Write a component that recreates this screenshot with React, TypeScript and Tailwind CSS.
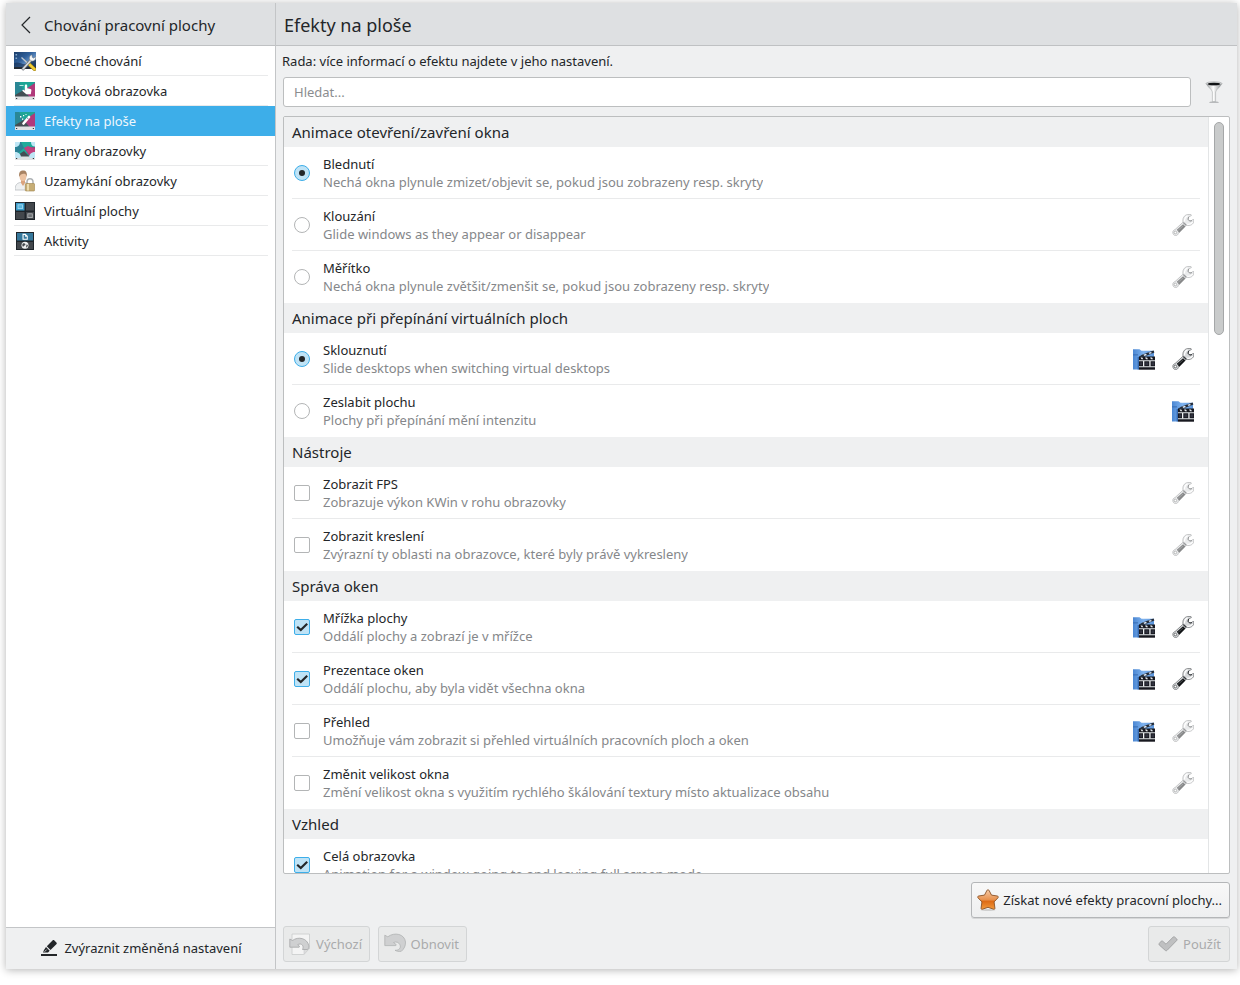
import { useState, type FC, type ReactNode } from "react";

interface Effect {
  name: string;
  description: string;
  checked?: boolean;
  video?: boolean;
  config?: "enabled" | "disabled";
}

interface EffectGroup {
  title: string;
  type: "radio" | "checkbox";
  effects: Effect[];
}

const groups: EffectGroup[] = [
  {
    title: "Animace otevření/zavření okna",
    type: "radio",
    effects: [
      {
        name: "Blednutí",
        description: "Nechá okna plynule zmizet/objevit se, pokud jsou zobrazeny resp. skryty",
        checked: true,
      },
      {
        name: "Klouzání",
        description: "Glide windows as they appear or disappear",
        config: "disabled",
      },
      {
        name: "Měřítko",
        description: "Nechá okna plynule zvětšit/zmenšit se, pokud jsou zobrazeny resp. skryty",
        config: "disabled",
      },
    ],
  },
  {
    title: "Animace při přepínání virtuálních ploch",
    type: "radio",
    effects: [
      {
        name: "Sklouznutí",
        description: "Slide desktops when switching virtual desktops",
        checked: true,
        video: true,
        config: "enabled",
      },
      {
        name: "Zeslabit plochu",
        description: "Plochy při přepínání mění intenzitu",
        video: true,
      },
    ],
  },
  {
    title: "Nástroje",
    type: "checkbox",
    effects: [
      {
        name: "Zobrazit FPS",
        description: "Zobrazuje výkon KWin v rohu obrazovky",
        config: "disabled",
      },
      {
        name: "Zobrazit kreslení",
        description: "Zvýrazní ty oblasti na obrazovce, které byly právě vykresleny",
        config: "disabled",
      },
    ],
  },
  {
    title: "Správa oken",
    type: "checkbox",
    effects: [
      {
        name: "Mřížka plochy",
        description: "Oddálí plochy a zobrazí je v mřížce",
        checked: true,
        video: true,
        config: "enabled",
      },
      {
        name: "Prezentace oken",
        description: "Oddálí plochu, aby byla vidět všechna okna",
        checked: true,
        video: true,
        config: "enabled",
      },
      {
        name: "Přehled",
        description: "Umožňuje vám zobrazit si přehled virtuálních pracovních ploch a oken",
        video: true,
        config: "disabled",
      },
      {
        name: "Změnit velikost okna",
        description: "Změní velikost okna s využitím rychlého škálování textury místo aktualizace obsahu",
        config: "disabled",
      },
    ],
  },
  {
    title: "Vzhled",
    type: "checkbox",
    effects: [
      {
        name: "Celá obrazovka",
        description: "Animation for a window going to and leaving full screen mode",
        checked: true,
      },
    ],
  },
];

const WorkspaceIcon: FC = () => (
  <svg viewBox="0 0 22 20" className="h-5 w-[22px]" aria-hidden="true">
    <defs>
      <linearGradient id="workspace-bg" x1="0" y1="0" x2="1" y2="1">
        <stop offset="0" stopColor="#1b3d69" />
        <stop offset="0.4" stopColor="#2f5f9a" />
        <stop offset="0.6" stopColor="#5f8cc0" />
        <stop offset="1" stopColor="#1a3358" />
      </linearGradient>
    </defs>
    <rect x="0" y="1" width="22" height="17" fill="url(#workspace-bg)" />
    <path d="M0 12c5-2 8 2 12 1s6-4 10-4v7H0z" fill="#17335a" opacity=".7" />
    <rect x="0" y="16" width="22" height="2" fill="#242c36" />
    <path d="M1.500 3h1.600v1.600H1.500zM1.500 6.500h1.600v1.600H1.500z" fill="#86a9cb" />
    <path d="M7.500 6.500l7 6.500" stroke="#c3c9ce" strokeWidth="1.300" />
    <path d="M14.500 12.500l6 5.700" stroke="#a98712" strokeWidth="3.600" strokeLinecap="round" />
    <path d="M14.500 12.500l6 5.700" stroke="#f3cf35" strokeWidth="2.400" strokeLinecap="round" />
    <path d="M9 18L17.500 8.500" stroke="#6b7278" strokeWidth="2.800" strokeLinecap="round" />
    <path d="M9 18L17.500 8.500" stroke="#d9dcde" strokeWidth="1.600" strokeLinecap="round" />
    <path
      d="M15.800 8.800c-1-2 0-4.400 2.200-5l.2 2.500 1.500.9 2-1.600c.5 2.600-1.200 4.800-3.900 4.500z"
      fill="#f5f7f8"
      stroke="#5f666b"
      strokeWidth=".4"
    />
  </svg>
);

const ScreenBase: FC<{ children: ReactNode }> = ({ children }) => (
  <svg viewBox="0 0 20 18" className="h-[18px] w-5" aria-hidden="true">
    <rect width="20" height="15" fill="#1da596" />
    <path d="M0 0h4l4.500 8L0 13z" fill="#2a8795" />
    <path d="M20 1v14h-5.500L8.500 8.500z" fill="#b03a7b" />
    <path d="M0 15v-2l8.500-5 6 7z" fill="#444e54" />
    {children}
    <rect y="14.500" width="20" height="3.500" fill="#dfe1e3" />
    <path d="M1 16h1.200v1H1zM17.800 16H19v1h-1.200z" fill="#333a40" />
  </svg>
);

const TouchIcon: FC = () => (
  <ScreenBase>
    <path d="M4.500 3.500h4" stroke="#b9e8e1" strokeWidth="1" />
    <path
      d="M11 2.500c.8 0 1.200.5 1.200 1.200v2.600l3.200.7c.8.2 1.100.7 1 1.400l-.6 3.800h-4.500L7.500 9c-.4-.8.5-1.500 1.200-1l1.100.8V3.700c0-.7.5-1.200 1.200-1.200z"
      fill="#fff"
    />
  </ScreenBase>
);

const EffectsIcon: FC = () => (
  <ScreenBase>
    <path d="M8.500 11.500L14 5" stroke="#fff" strokeWidth="2.600" strokeLinecap="round" />
    <path d="M12 5.800l1.500 1.200" stroke="#3e6a78" strokeWidth=".8" />
    <path d="M5 4h1.400v1.400H5zM8 3h1.200v1.200H8zM7 6.500h1.200v1.200H7zM10.500 2h1v1h-1z" fill="#fff" />
  </ScreenBase>
);

const EdgesIcon: FC = () => (
  <svg viewBox="0 0 20 18" className="h-[18px] w-5" aria-hidden="true">
    <rect width="20" height="15" fill="#20ab9a" />
    <path d="M0 0h6l3 6-9 8z" fill="#2b8296" />
    <path d="M9 6l11-1v10h-5z" fill="#a73c78" />
    <path d="M9 6l4-2 7 3v3l-5 3z" fill="#c2417f" />
    <path d="M0 15l9-6 6 6z" fill="#444e54" />
    <rect y="14.500" width="20" height="3.500" fill="#dfe1e3" />
    <path d="M0 0h5c0 3-2 5-5 5zM20 0h-4c0 3 1.500 4.500 4 4.500zM0 10c4 0 6 2.500 6 6H0zM20 10c-4 0-6 2.500-6 6h6z" fill="#bfe6f5" />
    <path d="M1 16h1.200v1H1zM17.800 16H19v1h-1.200z" fill="#333a40" />
  </svg>
);

const LockIcon: FC = () => (
  <svg viewBox="0 0 20 22" className="h-[22px] w-5" aria-hidden="true">
    <path d="M0 20c0-5 2-7 5.500-7.500h5c3 .5 4.500 3 4.500 7.500z" fill="#eff1f2" stroke="#b9bdc0" strokeWidth=".8" />
    <path d="M6 10h4v3l-2 3-2-3z" fill="#dba37d" />
    <ellipse cx="8" cy="6.500" rx="3.400" ry="4.500" fill="#ecc3a2" />
    <path d="M4.200 7C3.500 2 5.500.6 8.200.6S12.400 2.500 11.800 7c-.6-2-1-3-2.300-3.200-2 0-4 .2-5.300 3.200z" fill="#a88363" />
    <path d="M12 14v-2c0-4.500 6-4.500 6 0v2" fill="none" stroke="#aeb2b5" strokeWidth="1.500" />
    <rect x="10.300" y="13.500" width="9.300" height="7.500" rx=".8" fill="#c6ad75" stroke="#9f834c" strokeWidth=".6" />
    <path d="M12 14h2v6.500h-2z" fill="#ecdcb0" />
  </svg>
);

const DesktopsIcon: FC = () => (
  <svg viewBox="0 0 20 18" className="h-[18px] w-5" aria-hidden="true">
    <rect width="20" height="18" fill="#1f252b" />
    <rect x="1" y="1" width="8.500" height="7.500" fill="#3b9bc8" />
    <rect x="3" y="2.800" width="4.500" height="3.800" fill="#5bb5dc" stroke="#a7dcf3" strokeWidth=".8" />
    <path d="M11 1h8v7.500h-8zM1 10h8.500v7H1zM11 10h8v7h-8z" fill="#43474c" />
    <rect x="12.800" y="11.800" width="4.500" height="3.800" fill="#6c7074" stroke="#b9bcbe" strokeWidth=".8" />
  </svg>
);

const ActivitiesIcon: FC = () => (
  <svg viewBox="0 0 18 18" className="h-[18px] w-[18px]" aria-hidden="true">
    <rect width="18" height="18" fill="#1f252b" />
    <path d="M1 1h16v7.500H1z" fill="#36789c" />
    <path d="M1 10h16v7H1z" fill="#43474c" />
    <path d="M6.500 1.800h3l2.300 2.300v3.700H6.500z" fill="#fff" />
    <path d="M7.600 2.900h1.500v1.800h1.700v2H7.600z" fill="#36789c" />
    <circle cx="9" cy="13.300" r="3.500" fill="#eef0f1" />
    <path d="M7 11.300l2 .2.500 1.500-1.500.8-1 1.200-.8-2zM10.500 12.500l1.500.5-.8 2-1.200.6z" fill="#43474c" />
  </svg>
);

const WrenchIcon: FC = () => (
  <svg viewBox="0 0 22 22" className="h-[22px] w-[22px]" aria-hidden="true">
    <path
      d="M.8 18.300c0-1.300.9-2.300 2.200-2.700L11 8.200C10.300 4.300 12 1.300 15.600.5l3.300-.1.500 1.200-2.600 1.200-.6 2.400 1.600 1.700 2.200-.5 1.300-1.400.6.8c.3 3.700-2.500 6-6.100 5.600l-1.600-.1-7.800 8c-.3 1.300-1.300 2.300-2.700 2.300-1.700 0-2.900-1.400-2.900-3.300z"
      fill="#d6d8da"
      stroke="#66696b"
      strokeWidth=".7"
      strokeLinejoin="round"
    />
    <path d="M4.800 15.800l6.300-5.600 2.300 2.300-6.200 6.200z" fill="#141618" />
    <path d="M6.200 16.300l5-4.500" stroke="#5b5f62" strokeWidth=".8" />
    <path d="M12.500 7.500c-.1-2.600.9-4.700 3-5.700M14.300 10c2.800.8 5.100-.1 6.300-2" fill="none" stroke="#fff" strokeWidth="1.300" />
    <path d="M16.600 2.900L16 5.300l1.700 1.800 2.300-.4" fill="none" stroke="#2d3033" strokeWidth="1" />
    <path d="M11.300 8.600l3 2.700" stroke="#34373a" strokeWidth="1.300" />
    <circle cx="3.400" cy="18.500" r="1.300" fill="#fff" stroke="#55585a" strokeWidth=".8" />
  </svg>
);

const VideoIcon: FC = () => (
  <svg viewBox="0 0 22 22" className="h-[22px] w-[22px]" aria-hidden="true">
    <defs>
      <linearGradient id="video-blue" x1="0" y1="0" x2="1" y2="0">
        <stop offset="0" stopColor="#4a86d2" />
        <stop offset="0.5" stopColor="#7eb2ee" />
        <stop offset="1" stopColor="#5b95dc" />
      </linearGradient>
    </defs>
    <path d="M0 1.200h6.500l2 1.600H21v6.500H6V21.500H0z" fill="url(#video-blue)" />
    <path d="M0 6.500h5v.8H0z" fill="#2f61a6" />
    <path d="M4.600 9h1.400v12.500H4.600z" fill="#3569b0" />
    <path d="M6 8.800l3-2.100L20.500 2.500l.9 2L11 8.800z" fill="#262c36" />
    <path d="M10.300 6.700l2.500-.9 1.200 1.200-2.500 1zM15.500 4.800l2.300-.8 1.200 1.100-2.400 1z" fill="#dbe7f6" />
    <path d="M6 8.500h16v13.200H6z" fill="#17181f" />
    <path d="M7.500 9.500h1.800l1 1.800H8.500zM12 9.500h2l1 1.800h-2zM17 9.500h2l1 1.800h-2z" fill="#e5e9ed" />
    <path d="M6 12.300h16v1H6zM6 18.200h16v1H6z" fill="#dfe3e7" />
    <path d="M10 13h1.300v5.500H10zM16.300 13h1.300v5.500h-1.300z" fill="#eef1f4" />
    <path d="M6.800 14.200h2.500v3H6.800zM12.300 14.200h3v3h-3zM18.500 14.200h2.800v3h-2.800z" fill="#30323f" />
  </svg>
);

const FilterIcon: FC = () => (
  <svg viewBox="0 0 18 22" className="h-[22px] w-[18px]" aria-hidden="true">
    <defs>
      <linearGradient id="filter-metal">
        <stop offset="0" stopColor="#9b9ea0" />
        <stop offset="0.45" stopColor="#ffffff" />
        <stop offset="1" stopColor="#8c8f91" />
      </linearGradient>
    </defs>
    <ellipse cx="9" cy="21.200" rx="5" ry=".6" fill="#a5a7a9" />
    <path d="M1.200 2.500c1.500 4 5.700 5.500 6.200 8.500V20.500h3.200V11c.6-3 4.700-4.500 6.200-8.500z" fill="url(#filter-metal)" stroke="#8c8f91" strokeWidth=".4" />
    <ellipse cx="9" cy="2.500" rx="8" ry="1.800" fill="#d2d4d5" stroke="#8e9193" strokeWidth=".4" />
    <ellipse cx="9" cy="3" rx="6.300" ry="1.300" fill="#111315" />
  </svg>
);

const StarIcon: FC = () => (
  <svg viewBox="0 0 22 22" className="h-[22px] w-[22px]" aria-hidden="true">
    <defs>
      <linearGradient id="star-orange" x1="0" y1="0" x2="0" y2="1">
        <stop offset="0" stopColor="#f7cba8" />
        <stop offset="0.5" stopColor="#e8924f" />
        <stop offset="0.6" stopColor="#de6c16" />
        <stop offset="1" stopColor="#f29a3c" />
      </linearGradient>
    </defs>
    <ellipse cx="11" cy="21" rx="7.500" ry=".8" fill="#c4c4c4" />
    <path
      d="M11 .7c.6 0 .9.400 1.200 1l2.300 4.400 5.800.9c1.100.2 1.300 1.200.6 1.900l-3.800 4 .8 6.100c.1 1.200-.6 1.600-1.500 1.200L11 18.300l-5.400 1.900c-.9.400-1.600 0-1.500-1.200l.8-6.100-3.800-4C.4 8.200.6 7.200 1.700 7l5.800-.9L9.800 1.700c.3-.6.600-1 1.200-1z"
      fill="url(#star-orange)"
      stroke="#8a5227"
      strokeWidth=".9"
    />
  </svg>
);

const DefaultsIcon: FC = () => (
  <svg viewBox="0 0 22 22" className="h-[22px] w-[22px]" aria-hidden="true">
    <path d="M3 1h17.500v14.500L14.500 21.500H3z" fill="#f4f4f4" stroke="#c9cbcc" strokeWidth=".8" />
    <path d="M20.500 15.500h-5.500v6z" fill="#dcdddd" stroke="#c9cbcc" strokeWidth=".6" />
    <path
      d="M.8 6l2.700 1.500C9 3.200 18.500 5 19.800 12.800c.2 1.500-.3 2.700-1.300 3.700h-5c1.300-2.700.3-5.200-2.300-5.500-1 0-1.800.2-2.500.7l1.800 1.500-.4 1H.8z"
      fill="#cfd0d1"
      stroke="#a4a6a7"
      strokeWidth=".8"
      strokeLinejoin="round"
    />
  </svg>
);

const ResetIcon: FC = () => (
  <svg viewBox="0 0 22 22" className="h-[22px] w-[22px]" aria-hidden="true">
    <path
      d="M.8 2.200l3 1.600C10.500-1.200 20.500.8 21.500 9c.2 4-1.500 7-4.200 9.300-2.300.4-4.600 0-6.300-1 4 .2 6.300-2.500 5-5.500-1.200-2.600-3.800-3.400-6.500-2.300l2.700 2.100-.4 1H.8z"
      fill="#cfd0d1"
      stroke="#b0b2b3"
      strokeWidth=".8"
      strokeLinejoin="round"
    />
  </svg>
);

const ApplyIcon: FC = () => (
  <svg viewBox="0 0 20 18" className="h-[18px] w-5" aria-hidden="true">
    <path
      d="M1.200 8.500l2-2.300c.5-.4 1-.4 1.500 0L8 9.200 15.200 2c.4-.4 1-.4 1.400 0l2.200 2c.4.4.4 1 0 1.400L9 15.400c-.6.500-1.200.5-1.700 0L1.200 9.900c-.3-.4-.3-.9 0-1.400z"
      fill="#bfc0c1"
      stroke="#a0a2a3"
      strokeWidth=".9"
    />
  </svg>
);

const HighlightIcon: FC = () => (
  <svg viewBox="0 0 16 16" className="h-4 w-4" aria-hidden="true">
    <path d="M0 14h16v2H0z" fill="#232629" />
    <path d="M12 0c.6-.3 1 0 1.400.4l2 2c.5.500.5 1 .2 1.500L9.500 10 5.800 6.200z" fill="#232629" />
    <path d="M5 7l3.700 3.700L7 12.500H2L3 10z" fill="#232629" />
    <path d="M3.500 11.800l2.200-2.200" stroke="#eff0f1" strokeWidth=".8" />
  </svg>
);

const pages: { label: string; icon: FC }[] = [
  { label: "Obecné chování", icon: WorkspaceIcon },
  { label: "Dotyková obrazovka", icon: TouchIcon },
  { label: "Efekty na ploše", icon: EffectsIcon },
  { label: "Hrany obrazovky", icon: EdgesIcon },
  { label: "Uzamykání obrazovky", icon: LockIcon },
  { label: "Virtuální plochy", icon: DesktopsIcon },
  { label: "Aktivity", icon: ActivitiesIcon },
];

const Sidebar: FC = () => {
  const [current, setCurrent] = useState("Efekty na ploše");

  return (
    <aside className="flex w-[270px] shrink-0 flex-col border-r border-[#c3c5c7] bg-white">
      <div className="flex h-[43px] shrink-0 items-center border-b border-[#bfc1c3] bg-[#dee0e2] pt-0.5">
        <button type="button" aria-label="Zpět" className="flex w-[38px] justify-center pl-0.5">
          <svg viewBox="0 0 10 18" className="h-[18px] w-2.5" aria-hidden="true">
            <path d="M9 1L1 9l8 8" fill="none" stroke="#232629" strokeWidth="1.200" />
          </svg>
        </button>
        <h2 className="text-[15px] leading-5">Chování pracovní plochy</h2>
      </div>
      <nav className="flex-1">
        {pages.map(({ label, icon: Icon }) => {
          const selected = label === current;
          return (
            <a
              key={label}
              href="#"
              onClick={() => setCurrent(label)}
              aria-current={selected ? "page" : undefined}
              className={
                selected
                  ? "block bg-[#3daee9] pr-[7px] pl-2 text-[#eff7fc]"
                  : "block pr-[7px] pl-2"
              }
            >
              <span
                className={
                  selected
                    ? "flex h-[30px] items-center gap-2 border-b border-transparent"
                    : "flex h-[30px] items-center gap-2 border-b border-[#e9eaeb]"
                }
              >
                <span className="flex w-[22px] justify-center">
                  <Icon />
                </span>
                {label}
              </span>
            </a>
          );
        })}
      </nav>
      <div className="flex h-[42px] shrink-0 items-center justify-center border-t border-[#c3c5c7] bg-[#eff0f1] pb-0.5">
        <button type="button" className="flex items-center gap-[7px] pl-0.5">
          <HighlightIcon />
          Zvýraznit změněná nastavení
        </button>
      </div>
    </aside>
  );
};

interface EffectRowProps {
  effect: Effect;
  type: "radio" | "checkbox";
  group: string;
  last: boolean;
}

const EffectRow: FC<EffectRowProps> = ({ effect, type, group, last }) => (
  <li
    className={
      last
        ? "mx-2 flex h-[52px] items-center border-b border-transparent"
        : "mx-2 flex h-[52px] items-center border-b border-[#e9eaeb]"
    }
  >
    <label className="flex min-w-0 flex-1 items-center gap-3 pl-0.5">
      <span className="grid place-items-center">
        <input
          type={type}
          name={type === "radio" ? group : effect.name}
          defaultChecked={effect.checked}
          className={
            type === "radio"
              ? "peer col-start-1 row-start-1 h-4 w-4 appearance-none rounded-full border border-[#b3b5b6] bg-white checked:border-[#3daee9] checked:bg-[#bfe3f6]"
              : "peer col-start-1 row-start-1 h-4 w-4 appearance-none rounded-[2px] border border-[#b3b5b6] bg-white checked:border-[#3daee9] checked:bg-[#bfe3f6]"
          }
        />
        <svg
          viewBox="0 0 16 16"
          className="pointer-events-none invisible col-start-1 row-start-1 h-4 w-4 peer-checked:visible"
          aria-hidden="true"
        >
          {type === "radio" ? (
            <circle cx="8" cy="8" r="3" fill="#232629" />
          ) : (
            <path d="M3.200 7.700l3.600 3.300L13.200 4.800" fill="none" stroke="#232629" strokeWidth="2.200" />
          )}
        </svg>
      </span>
      <span className="min-w-0 pl-px leading-[18px]">
        <span className="block">{effect.name}</span>
        <span className="block truncate text-[#85878a]">{effect.description}</span>
      </span>
    </label>
    <div className="flex gap-[5px]">
      {effect.video && (
        <button type="button" aria-label="Přehrát ukázku" className="p-1.5">
          <VideoIcon />
        </button>
      )}
      {effect.config && (
        <button
          type="button"
          aria-label="Nastavit"
          disabled={effect.config === "disabled"}
          className="p-1.5 disabled:opacity-50"
        >
          <WrenchIcon />
        </button>
      )}
    </div>
  </li>
);

const disabledButton =
  "flex h-9 items-center rounded-[3px] border border-[#d3d5d6] bg-[#e9eaea] text-[#a9abac]";

const App: FC = () => {
  const [search, setSearch] = useState("");

  return (
    <div className="h-screen bg-white pt-[3px] pr-[3px] pb-4 pl-1.5 font-['Noto_Sans',sans-serif] text-[13px] leading-[18px] text-[#232629]">
      <div className="flex h-full rounded-t-[3px] bg-[#eff0f1] shadow-[0_1px_8px_rgba(0,0,0,0.3)]">
        <Sidebar />
        <main className="flex min-w-0 flex-1 flex-col">
          <header className="flex h-[43px] shrink-0 items-center border-b border-[#bfc1c3] bg-[#dee0e2] px-2 pt-0.5">
            <h1 className="text-[18px] leading-6">Efekty na ploše</h1>
          </header>
          <div className="flex min-h-0 flex-1 flex-col pt-1.5 pr-[7px] pb-[7px] pl-[7px]">
            <p className="-ml-px">Rada: více informací o efektu najdete v jeho nastavení.</p>
            <div className="mt-[7px] flex items-center">
              <input
                type="text"
                aria-label="Hledat"
                placeholder="Hledat..."
                value={search}
                onChange={(e) => setSearch(e.target.value)}
                className="h-[30px] min-w-0 flex-1 rounded-[3px] border border-[#bcbebf] bg-white px-2.5 outline-none placeholder:text-[#8b8d8f] focus:border-[#3daee9]"
              />
              <button type="button" aria-label="Filtr" className="flex w-[39px] justify-center pl-1.5">
                <FilterIcon />
              </button>
            </div>

            <div className="mt-[9px] flex min-h-0 flex-1 overflow-hidden rounded-[2px] border border-[#bcbebf] bg-white">
              <div className="min-w-0 flex-1 overflow-y-auto [scrollbar-width:none]">
                {groups.map((group) => (
                  <section key={group.title}>
                    <h2 className="flex h-[30px] items-center bg-[#eff0f1] px-2 text-[15px] leading-5">
                      {group.title}
                    </h2>
                    <ul>
                      {group.effects.map((effect, index) => (
                        <EffectRow
                          key={effect.name}
                          effect={effect}
                          type={group.type}
                          group={group.title}
                          last={index === group.effects.length - 1}
                        />
                      ))}
                    </ul>
                  </section>
                ))}
              </div>
              <div className="flex w-[21px] shrink-0 justify-center border-l border-[#e3e5e6] py-[5px]">
                <div className="h-[213px] w-2.5 rounded-full border border-[#a5a7a8] bg-[#c9cbcb]" />
              </div>
            </div>

            <div className="mt-2 flex justify-end">
              <button
                type="button"
                className="flex h-9 items-center gap-1 rounded-[3px] border border-[#b4b6b8] bg-linear-to-b from-[#f8f8f8] to-[#eeeff0] pr-[7px] pl-[5px] shadow-[0_1px_0_rgba(0,0,0,0.1)]"
              >
                <StarIcon />
                Získat nové efekty pracovní plochy...
              </button>
            </div>
            <div className="mt-2 flex gap-2">
              <button type="button" disabled className={`${disabledButton} w-[87px] justify-between pr-[7px] pl-[5px]`}>
                <DefaultsIcon />
                Výchozí
              </button>
              <button type="button" disabled className={`${disabledButton} w-[89px] justify-between pr-[7px] pl-[5px]`}>
                <ResetIcon />
                Obnovit
              </button>
              <button type="button" disabled className={`${disabledButton} ml-auto w-[82px] justify-between pr-2 pl-[9px]`}>
                <ApplyIcon />
                Použít
              </button>
            </div>
          </div>
        </main>
      </div>
    </div>
  );
};

export default App;
